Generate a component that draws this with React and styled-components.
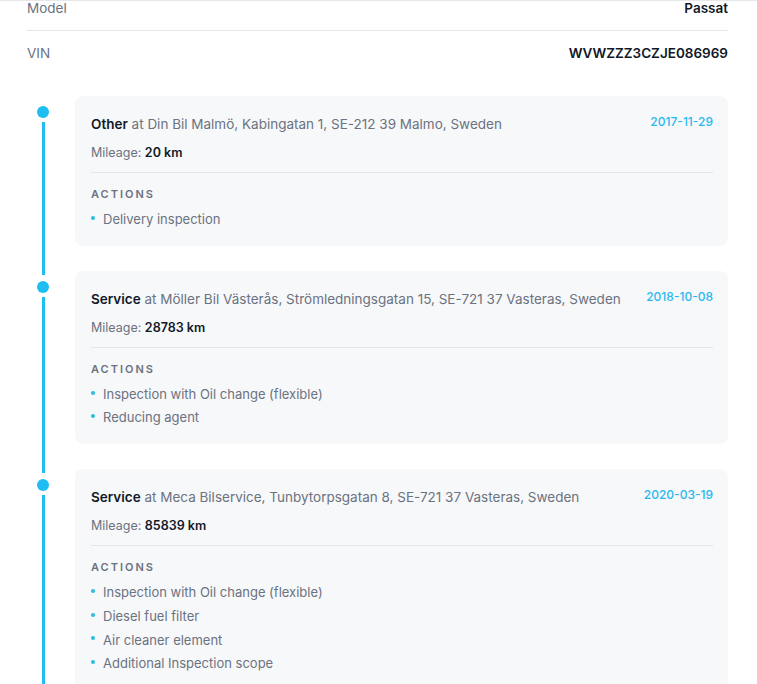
import styled, { createGlobalStyle } from "styled-components"

const GlobalStyle = createGlobalStyle`
    html, body {
        margin: 0;
        padding: 0;
        background: #ffffff;
        font-family: Inter, "Noto Sans", sans-serif;
        overflow: hidden;
    }
`

const vehicle = [
    { label: "Model", value: "Passat" },
    { label: "VIN", value: "WVWZZZ3CZJE086969" },
]

const history = [
    {
        type: "Other",
        place: "Din Bil Malmö, Kabingatan 1, SE-212 39 Malmo, Sweden",
        date: "2017-11-29",
        mileage: "20 km",
        actions: ["Delivery inspection"],
    },
    {
        type: "Service",
        place: "Möller Bil Västerås, Strömledningsgatan 15, SE-721 37 Vasteras, Sweden",
        date: "2018-10-08",
        mileage: "28783 km",
        actions: ["Inspection with Oil change (flexible)", "Reducing agent"],
    },
    {
        type: "Service",
        place: "Meca Bilservice, Tunbytorpsgatan 8, SE-721 37 Vasteras, Sweden",
        date: "2020-03-19",
        mileage: "85839 km",
        actions: [
            "Inspection with Oil change (flexible)",
            "Diesel fuel filter",
            "Air cleaner element",
            "Additional Inspection scope",
        ],
    },
]

export default function App() {
    return (
        <>
            <GlobalStyle />
            <HeaderEdge />
            <Sheet>
                <Specs>
                    {vehicle.map((row) => (
                        <SpecRow key={row.label}>
                            <span className="label">{row.label}</span>
                            <span className="value">{row.value}</span>
                        </SpecRow>
                    ))}
                </Specs>

                <Timeline>
                    {history.map((entry, i) => (
                        <Entry key={entry.date}>
                            <Rail>
                                <Stem $hidden={i === 0} />
                                <Dot />
                                <Line />
                            </Rail>
                            <Card>
                                <CardHead>
                                    <Title>
                                        <b>{entry.type}</b> at {entry.place}
                                    </Title>
                                    <DateTag>{entry.date}</DateTag>
                                </CardHead>
                                <Mileage>
                                    Mileage: <b>{entry.mileage}</b>
                                </Mileage>
                                <Divider />
                                <ActionsLabel>Actions</ActionsLabel>
                                <Actions>
                                    {entry.actions.map((a) => (
                                        <li key={a}>{a}</li>
                                    ))}
                                </Actions>
                            </Card>
                        </Entry>
                    ))}
                </Timeline>
            </Sheet>
        </>
    )
}

// bottom edge of the sticky header above the scrolled content
const HeaderEdge = styled.div`
    position: fixed;
    top: 0;
    left: 0;
    right: 0;
    height: 1px;
    background: #e6e8eb;
    z-index: 2;
`

const Sheet = styled.div`
    margin-top: -14px;
    padding: 0 29px 0 27px;
`

const Specs = styled.div`
    display: flex;
    flex-direction: column;
`

const SpecRow = styled.div`
    display: flex;
    align-items: center;
    justify-content: space-between;
    height: 44px;
    font-size: 13.5px;

    & + & {
        border-top: 1px solid #e5e7eb;
    }

    .label {
        color: #6b7280;
    }

    .value {
        color: #111827;
        font-weight: 600;
    }
`

const Timeline = styled.div`
    display: flex;
    flex-direction: column;
    margin-top: 21px;
`

const Entry = styled.div`
    display: grid;
    grid-template-columns: 48px 1fr;
`

const Rail = styled.div`
    display: flex;
    flex-direction: column;
    align-items: center;
    padding-right: 16px;
`

const Stem = styled.div`
    width: 3px;
    height: 4px;
    background: #1fbdf2;
    visibility: ${(p) => (p.$hidden ? "hidden" : "visible")};
`

const Dot = styled.div`
    width: 12px;
    height: 12px;
    border-radius: 50%;
    background: #1fbdf2;
    margin: 6px 0 4px;
`

const Line = styled.div`
    flex: 1;
    width: 3px;
    background: #1fbdf2;
`

const Card = styled.div`
    background: #f7f8fa;
    border-radius: 8px;
    padding: 18px 15px 14px 16px;
    margin-bottom: 25px;
`

const CardHead = styled.div`
    display: flex;
    justify-content: space-between;
    align-items: flex-start;
    gap: 20px;
`

const Title = styled.div`
    font-size: 13.5px;
    line-height: 20px;
    color: #6b7280;

    b {
        color: #111827;
        font-weight: 600;
    }
`

const DateTag = styled.div`
    font-size: 12px;
    line-height: 16px;
    color: #29b8ee;
    font-weight: 500;
    white-space: nowrap;
`

const Mileage = styled.div`
    margin-top: 9px;
    font-size: 12.5px;
    line-height: 20px;
    color: #6b7280;

    b {
        color: #111827;
        font-weight: 600;
    }
`

const Divider = styled.div`
    height: 1px;
    background: #e3e5e8;
    margin-top: 9px;
`

const ActionsLabel = styled.div`
    margin-top: 13px;
    font-size: 11px;
    line-height: 16px;
    letter-spacing: 2px;
    text-transform: uppercase;
    font-weight: 600;
    color: #6b7280;
`

const Actions = styled.ul`
    list-style: none;
    margin: 6px 0 0;
    padding: 0;

    li {
        display: flex;
        align-items: center;
        gap: 8px;
        font-size: 13px;
        line-height: 23.7px;
        color: #6b7280;
    }

    li::before {
        content: "";
        width: 4px;
        height: 4px;
        border-radius: 50%;
        background: #29bde0;
        margin-top: -4px;
    }
`
